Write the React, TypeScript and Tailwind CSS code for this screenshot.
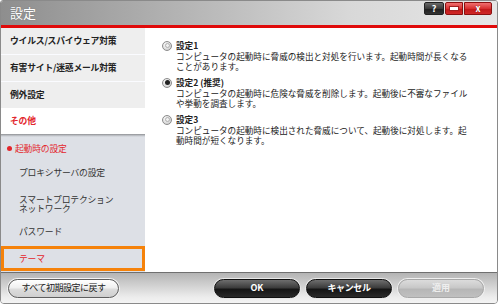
import React from "react";

const font = "font-['Noto_Sans_CJK_JP','Noto_Sans',sans-serif]";

function Radio({ checked }: { checked?: boolean }) {
  return (
    <div className="w-[10px] h-[10px] rounded-full border border-[#8c8c8c] bg-[radial-gradient(circle_at_40%_35%,#ffffff,#d4d4d4_70%,#b8b8b8)] flex items-center justify-center shrink-0">
      {checked ? (
        <div className="w-[5px] h-[5px] rounded-full bg-[#222]" />
      ) : (
        <div className="w-[5px] h-[5px] rounded-full border border-[#b0b0b0] bg-[#f0f0f0]" />
      )}
    </div>
  );
}

function Option({
  label,
  lines,
  checked,
}: {
  label: string;
  lines: string[];
  checked?: boolean;
}) {
  return (
    <div className="flex flex-col mb-[6px]">
      <div className="flex items-center h-[11px]">
        <div className="w-[15px] pl-[1px] flex items-center">
          <Radio checked={checked} />
        </div>
        <span className="font-bold text-[8.6px] text-[#222] leading-[11px]">
          {label}
        </span>
      </div>
      <div className="pl-[15px] flex flex-col">
        {lines.map((l, i) => (
          <span
            key={i}
            className="text-[8.6px] leading-[10px] text-[#222] whitespace-nowrap"
          >
            {l}
          </span>
        ))}
      </div>
    </div>
  );
}

export default function App() {
  return (
    <div className={`w-[500px] h-[306px] bg-white ${font}`}>
      <div className="w-[498px] h-[304px] border border-[#8a8a8a] rounded-t-[3px] rounded-b-[4px] overflow-hidden flex flex-col bg-white">
        {/* Title bar */}
        <div className="h-[24px] shrink-0 flex items-start justify-between bg-[linear-gradient(to_right,#8e8e8e,#a8a8a8_25%,#bdbdbd_45%,#d8d8d8_70%,#e6e6e6)]">
          <span className="text-white text-[13px] leading-none pl-[9px] pt-[5px] [text-shadow:0_0_1px_#666]">
            設定
          </span>
          <div className="flex pt-[1px] pr-[5px] gap-[1px]">
            <div className="w-[20px] h-[13px] rounded-[2px] border border-[#222] bg-[linear-gradient(#6a6a6a,#3a3a3a_50%,#1e1e1e_51%,#333)] flex items-center justify-center text-white text-[9px] font-bold leading-none">
              ?
            </div>
            <div className="w-[18px] h-[13px] rounded-l-[2px] border border-[#8a1010] bg-[linear-gradient(#f07070,#d83030_50%,#c01818_51%,#d02828)] flex items-center justify-center">
              <div className="w-[8px] h-[3px] bg-white border border-[#a02020] box-content" />
            </div>
            <div className="w-[28px] h-[13px] rounded-r-[2px] border border-[#8a1010] bg-[linear-gradient(#f07070,#d83030_50%,#c01818_51%,#d02828)] flex items-center justify-center text-white text-[9px] font-bold leading-none [text-shadow:0_0_1px_#600]">
              x
            </div>
          </div>
        </div>
        <div className="h-[3px] shrink-0 bg-[#e00a0a]" />

        {/* Body */}
        <div className="flex h-[244px] shrink-0">
          {/* Sidebar */}
          <div className="w-[144px] shrink-0 flex flex-col text-[8.8px] tracking-[-0.2px]">
            <div className="h-[26px] bg-[#eeeeee] flex items-center pl-[9px] font-bold text-[#222]">
              ウイルス/スパイウェア対策
            </div>
            <div className="h-[1px] bg-[#fafbff]" />
            <div className="h-[26px] bg-[#eeeeee] flex items-center pl-[9px] font-bold text-[#222]">
              有害サイト/迷惑メール対策
            </div>
            <div className="h-[1px] bg-[#fafbff]" />
            <div className="h-[26px] bg-[#eeeeee] flex items-center pl-[9px] font-bold text-[#222]">
              例外設定
            </div>
            <div className="h-[26px] bg-white flex items-center pl-[9px] font-bold text-[#e3262c]">
              その他
            </div>
            <div className="flex-1 flex flex-col bg-[#dde0e6]">
              <div className="h-[3px] bg-[linear-gradient(#8e9094,#c4c7cc_60%,#dde0e6)]" />
              <div className="h-[23px] flex items-center pl-[6px] text-[#e3262c]">
                <span className="w-[5px] h-[5px] rounded-full bg-[#e3262c] mr-[3px]" />
                起動時の設定
              </div>
              <div className="h-[26px] flex items-center pl-[18px] text-[#333]">
                プロキシサーバの設定
              </div>
              <div className="h-[36px] flex flex-col justify-center pl-[18px] text-[#333] leading-[9.5px]">
                <span>スマートプロテクション</span>
                <span>ネットワーク</span>
              </div>
              <div className="h-[20px] flex items-center pl-[18px] text-[#333]">
                パスワード
              </div>
              <div className="h-[4px]" />
              <div className="h-[25px] border-[3px] border-[#f5820a] flex items-center pl-[15px] text-[#e3262c]">
                テーマ
              </div>
            </div>
          </div>

          {/* Content */}
          <div className="flex-1 bg-white pt-[12px] pl-[16px] flex flex-col">
            <Option
              label="設定1"
              lines={[
                "コンピュータの起動時に脅威の検出と対処を行います。起動時間が長くなる",
                "ことがあります。",
              ]}
            />
            <Option
              label="設定2 (推奨)"
              checked
              lines={[
                "コンピュータの起動時に危険な脅威を削除します。起動後に不審なファイル",
                "や挙動を調査します。",
              ]}
            />
            <Option
              label="設定3"
              lines={[
                "コンピュータの起動時に検出された脅威について、起動後に対処します。起",
                "動時間が短くなります。",
              ]}
            />
          </div>
        </div>

        {/* Footer */}
        <div className="flex-1 border-t border-[#707070] bg-[linear-gradient(#b4b4b4,#d0d0d0_40%,#ececec_80%,#f4f4f4)] flex items-center justify-between pl-[7px] pr-[13px]">
          <div className="w-[111px] h-[19px] rounded-full border border-[#5e5e5e] bg-[linear-gradient(#ffffff,#f0f0f0_45%,#dcdcdc_55%,#cfcfcf)] flex items-center justify-center text-[9px] tracking-[-0.5px] text-[#222] shadow-[0_0_0_1px_#f4f4f4]">
            すべて初期設定に戻す
          </div>
          <div className="flex gap-[6px]">
            <div className="w-[86px] h-[19px] rounded-full border border-[#111] bg-[linear-gradient(#6e6e6e,#3c3c3c_45%,#151515_55%,#2a2a2a)] flex items-center justify-center text-[9px] font-bold text-white shadow-[0_0_0_1px_#e8e8e8]">
              OK
            </div>
            <div className="w-[86px] h-[19px] rounded-full border border-[#111] bg-[linear-gradient(#6e6e6e,#3c3c3c_45%,#151515_55%,#2a2a2a)] flex items-center justify-center text-[9px] font-bold tracking-[-0.4px] text-white shadow-[0_0_0_1px_#e8e8e8]">
              キャンセル
            </div>
            <div className="w-[86px] h-[19px] rounded-full border border-[#a8a8a8] bg-[linear-gradient(#dcdcdc,#c8c8c8_45%,#b6b6b6_55%,#c0c0c0)] flex items-center justify-center text-[9px] font-bold text-[#eeeeee] shadow-[0_0_0_1px_#f0f0f0]">
              適用
            </div>
          </div>
        </div>
      </div>
    </div>
  );
}
